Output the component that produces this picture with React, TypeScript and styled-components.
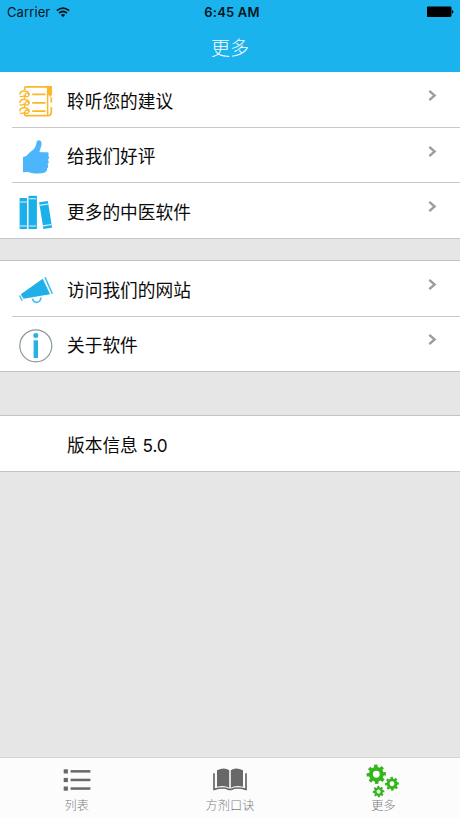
import React from 'react';
import styled, { createGlobalStyle } from 'styled-components';

const GlobalStyle = createGlobalStyle`
  *, *::before, *::after { box-sizing: border-box; }
  html, body, #root { margin: 0; height: 100%; }
  body { background: #e6e6e6; font-family: "Noto Sans CJK SC", sans-serif; }
  svg { display: block; }
`;

const Screen = styled.div`
  display: flex;
  flex-direction: column;
  width: 460px;
  height: 818px;
  background: #e6e6e6;
  overflow: hidden;
`;

const Header = styled.header`
  flex: none;
  height: 72px;
  background: #1bb3ed;
`;

const StatusBar = styled.div`
  display: grid;
  grid-template-columns: 1fr auto 1fr;
  align-items: center;
  height: 24px;
  padding: 0 5px 0 7px;
  color: #06151c;
  font: 400 13px/24px Inter, sans-serif;
`;

const Carrier = styled.div`
  display: flex;
  align-items: center;
  gap: 6px;
  letter-spacing: 0.1px;
`;

const Clock = styled.div`
  padding-left: 2px;
  font-weight: 600;
  letter-spacing: 0.2px;
  color: #04161e;
`;

const BatterySlot = styled.div`
  display: flex;
  justify-content: flex-end;
`;

const Title = styled.h1`
  margin: 0;
  height: 48px;
  color: #fff;
  font-size: 18.9px;
  font-weight: 300;
  line-height: 46px;
  text-align: center;
`;

const Group = styled.section<{ $gap?: number }>`
  flex: none;
  margin-top: ${(p) => p.$gap ?? 0}px;
  border-top: ${(p) => (p.$gap ? '1px solid #c4c4c4' : 'none')};
  border-bottom: 1px solid #c4c4c4;
  background: #fff;
`;

const Row = styled.div<{ $height: number }>`
  display: flex;
  height: ${(p) => p.$height}px;
  margin-left: 12px;
  padding-left: 7px;
  & + & { border-top: 1px solid #c8c8c8; }
`;

const IconSlot = styled.div<{ $top: number }>`
  width: 34px;
  padding-top: ${(p) => p.$top}px;
  margin-right: 14px;
`;

const Label = styled.span<{ $top: number }>`
  flex: 1;
  padding-top: ${(p) => p.$top}px;
  color: #0a0a0a;
  font: 400 17.7px/26px "Noto Sans CJK SC", sans-serif;
`;

const Version = styled.span`
  font-family: Inter, sans-serif;
  font-size: 17.2px;
  letter-spacing: -0.1px;
`;

const ChevronSlot = styled.div<{ $top: number }>`
  width: 32px;
  padding-top: ${(p) => p.$top}px;
`;

const TabBar = styled.nav`
  display: grid;
  grid-template-columns: repeat(3, 1fr);
  height: 61px;
  margin-top: auto;
  border-top: 1px solid #d4d4d4;
  background: #fcfcfc;
`;

const Tab = styled.div`
  display: flex;
  flex-direction: column;
  align-items: center;
  padding-top: 6px;
  color: #7c7c7c;
  font-size: 12.2px;
  font-weight: 300;
  line-height: 15px;
`;

const TabIcon = styled.div`
  height: 34px;
`;

const Wifi = () => (
  <svg width="14" height="11" viewBox="0 0 14 11" fill="none" stroke="#06151c">
    <path d="M0.8 3.6 Q7 -1.2 13.2 3.6" strokeWidth="1.8" />
    <path d="M3 6 Q7 2.9 11 6" strokeWidth="1.8" />
    <path d="M4.8 7.8 Q7 6.2 9.2 7.8 L7 10.2 Z" fill="#06151c" stroke="none" />
  </svg>
);

const Battery = () => (
  <svg width="28" height="12" viewBox="0 0 28 12">
    <rect x="-0.4" y="0.6" width="24.9" height="10.4" rx="1.4" fill="#000" />
    <path d="M25 4 Q26.4 4.4 26.4 5.8 Q26.4 7.2 25 7.6 Z" fill="#000" />
  </svg>
);

const Chevron = () => (
  <svg width="12" height="12" viewBox="0 0 12 12">
    <path d="M1.3 0.9 L6.6 5.5 L1.3 10.1" fill="none" stroke="#9d9d9d" strokeWidth="2.4" />
  </svg>
);

const Notebook = () => (
  <svg width="34" height="34" viewBox="0 0 34 34" fill="none" stroke="#fbb62a" strokeWidth="1.7">
    <path d="M5.6 5 V3.4 Q5.6 1.9 7.3 1.9 H32.2 V10" />
    <path d="M5.6 27.5 V29 Q5.6 30.7 7.3 30.7 H29" />
    <path d="M5.6 11 V13.5 M5.6 19.5 V22" strokeWidth="1.3" />
    <path d="M28.6 2 V30.5" strokeWidth="1.5" />
    <path d="M28.6 1.9 H33 V9 L31.4 12.2 L28.6 9 Z" fill="#fbb62a" stroke="none" />
    <path d="M32.3 12.5 V17.5 M32.3 22 V27.5 Q32 30.6 29 30.7" />
    <path d="M13.2 9.4 H26.5 M13.2 17.9 H26.5 M13.2 26.1 H26.5" strokeWidth="1.6" />
    {[6, 14.4, 22.8].map((y) => (
      <g key={y} transform={`translate(0 ${y})`}>
        <path d="M1 3.6 C0.5 1 3.2 -0.4 6.2 0 C9.5 0.5 10.6 2.6 9.8 4" strokeWidth="1.5" />
        <circle cx="7.9" cy="4" r="1.8" strokeWidth="1.3" />
        <path d="M0.8 5.2 Q3 6.4 5.8 4.4" strokeWidth="1.2" />
      </g>
    ))}
  </svg>
);

const Thumb = () => (
  <svg width="34" height="36" viewBox="0 0 34 36">
    <path
      d="M4 18.2 L7.7 16.8 C9.7 14 11.2 12.7 13.3 11.4 C16.5 9.2 17.2 5.7 17.7 2.8 Q18.2 1 20 1.2 C23 1.7 23 5 21.9 8 L20.4 13 Q24.5 13.5 28.6 13.2 C30 13.5 30 15.5 29.1 16.3 C30.6 17.8 30.1 20 28.9 20.8 C30.2 22.3 29.8 24.8 28.5 25.3 C29.7 27 29.4 28.8 28.1 29.3 L28 30.7 C27.8 33 25 34 22 34.3 C17 35 12.5 34.5 9.4 33.1 L4 33.2 Z"
      fill="#4db5fb"
    />
  </svg>
);

const Books = () => (
  <svg width="34" height="36" viewBox="0 0 34 36">
    <rect x="0.6" y="4" width="7.4" height="31" fill="#1bb0ea" />
    <rect x="9.5" y="1.8" width="8.4" height="33.2" fill="#1bb0ea" />
    <path d="M0.6 8 H8 M0.6 32 H8 M10.2 4.8 H17.2 M10.2 32 H17.2" stroke="#d7f2fc" strokeWidth="1.1" />
    <g transform="rotate(-9 26.6 21)">
      <rect x="22.2" y="7.5" width="8.8" height="27" fill="#1bb0ea" />
      <path d="M22.2 10.6 H31 M22.2 31.3 H31" stroke="#d7f2fc" strokeWidth="1.1" />
    </g>
  </svg>
);

const Megaphone = () => (
  <svg width="34" height="30" viewBox="0 0 34 30">
    <path d="M1.8 18.2 L23.7 2.7 L31.1 18.2 L4.5 22.7 Z" fill="#1fb0ea" />
    <path d="M26 1.2 L33.3 17.8" stroke="#36b8ec" strokeWidth="1.5" />
    <path d="M0.6 19.5 L3.1 24.7" stroke="#45bdee" strokeWidth="1.5" />
    <path d="M13.7 22.7 C14.5 27.8 21.2 27.6 22 21.5" fill="none" stroke="#4bc0ef" strokeWidth="1.8" />
  </svg>
);

const Info = () => (
  <svg width="34" height="34" viewBox="0 0 34 34">
    <circle cx="16.8" cy="16.8" r="16" fill="#fff" stroke="#8b999f" strokeWidth="1.2" />
    <circle cx="16.8" cy="6.6" r="2.5" fill="#26b1e7" />
    <rect x="14.6" y="11.3" width="4.4" height="17.7" fill="#26b1e7" />
  </svg>
);

const ListIcon = () => (
  <svg width="28" height="34" viewBox="0 0 28 34" fill="#686868">
    {[5.3, 13.9, 22.5].map((y) => (
      <React.Fragment key={y}>
        <rect x="0.7" y={y} width="4.2" height="4.2" />
        <rect x="7.6" y={y + 0.8} width="19.8" height="2.5" />
      </React.Fragment>
    ))}
  </svg>
);

const OpenBook = () => (
  <svg width="34" height="34" viewBox="0 0 34 34">
    <path
      d="M4 6.3 Q11.5 2.9 16.2 6.3 V23.8 Q11.5 21 4 22.8 Z M17.8 6.3 Q22.5 2.9 30 6.3 V22.8 Q22.5 21 17.8 23.8 Z"
      fill="#686868"
    />
    <path
      d="M1 9.2 V25.4 Q10.5 22.6 15.8 25.4 H18.2 Q23.5 22.6 33 25.4 V9.2"
      fill="none"
      stroke="#686868"
      strokeWidth="1.7"
    />
  </svg>
);

const gearPath = (cx: number, cy: number, r: number) => {
  const teeth = 8;
  const step = (Math.PI * 2) / teeth;
  const points: string[] = [];
  for (let i = 0; i < teeth; i += 1) {
    const corners: [number, number][] = [
      [-0.3, 0.76],
      [-0.22, 1],
      [0.22, 1],
      [0.3, 0.76],
    ];
    corners.forEach(([offset, scale]) => {
      const angle = (i + offset) * step - 0.06;
      points.push(`${(cx + Math.cos(angle) * r * scale).toFixed(2)} ${(cy + Math.sin(angle) * r * scale).toFixed(2)}`);
    });
  }
  const hole = r * 0.35;
  return `M${points.join('L')}Z M${cx - hole} ${cy} a${hole} ${hole} 0 1 0 ${hole * 2} 0 a${hole} ${hole} 0 1 0 ${-hole * 2} 0Z`;
};

const Gears = () => (
  <svg width="34" height="34" viewBox="0 0 34 34" fill="#34b51b" fillRule="evenodd">
    <path d={gearPath(10.3, 10.3, 9.8)} />
    <path d={gearPath(26, 19.8, 7)} />
    <path d={gearPath(12.6, 27.6, 5.8)} />
  </svg>
);

interface Item {
  label: string;
  detail?: string;
  icon?: React.ReactNode;
  height: number;
  iconTop?: number;
  labelTop: number;
  chevronTop?: number;
}

interface ItemGroup {
  gap?: number;
  items: Item[];
}

const groups: ItemGroup[] = [
  {
    items: [
      { label: '聆听您的建议', icon: <Notebook />, height: 55, iconTop: 13, labelTop: 15, chevronTop: 18 },
      { label: '给我们好评', icon: <Thumb />, height: 55, iconTop: 11, labelTop: 14, chevronTop: 18 },
      { label: '更多的中医软件', icon: <Books />, height: 56, iconTop: 11, labelTop: 15, chevronTop: 18 },
    ],
  },
  {
    gap: 21,
    items: [
      { label: '访问我们的网站', icon: <Megaphone />, height: 55, iconTop: 15, labelTop: 15, chevronTop: 18 },
      { label: '关于软件', icon: <Info />, height: 55, iconTop: 12, labelTop: 14, chevronTop: 17 },
    ],
  },
  {
    gap: 43,
    items: [{ label: '版本信息', detail: '5.0', height: 55, labelTop: 15 }],
  },
];

const tabs = [
  { label: '列表', icon: <ListIcon /> },
  { label: '方剂口诀', icon: <OpenBook /> },
  { label: '更多', icon: <Gears /> },
];

export default function App() {
  return (
    <>
      <GlobalStyle />
      <Screen>
        <Header>
          <StatusBar>
            <Carrier>
              Carrier
              <Wifi />
            </Carrier>
            <Clock>6:45 AM</Clock>
            <BatterySlot>
              <Battery />
            </BatterySlot>
          </StatusBar>
          <Title>更多</Title>
        </Header>
        {groups.map((group) => (
          <Group key={group.items[0].label} $gap={group.gap}>
            {group.items.map((item) => (
              <Row key={item.label} $height={item.height}>
                <IconSlot $top={item.iconTop ?? 0}>{item.icon}</IconSlot>
                <Label $top={item.labelTop}>
                  {item.label}
                  {item.detail && <Version> {item.detail}</Version>}
                </Label>
                {item.chevronTop !== undefined && (
                  <ChevronSlot $top={item.chevronTop}>
                    <Chevron />
                  </ChevronSlot>
                )}
              </Row>
            ))}
          </Group>
        ))}
        <TabBar>
          {tabs.map((tab) => (
            <Tab key={tab.label}>
              <TabIcon>{tab.icon}</TabIcon>
              {tab.label}
            </Tab>
          ))}
        </TabBar>
      </Screen>
    </>
  );
}
